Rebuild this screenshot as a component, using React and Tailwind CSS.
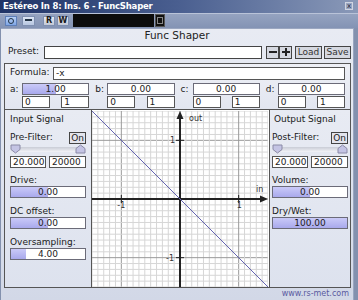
import React from "react";

const font = { fontFamily: '"DejaVu Sans", Verdana, sans-serif' };

const Slider = ({ text, fill, className = "" }) => {
    return (
        <div className={"relative h-[12px] border border-[#6b6b78] bg-white " + className}>
            <div className="absolute left-0 top-0 bottom-0 bg-gradient-to-b from-[#cacaf8] to-[#a9a9ec]" style={{ width: fill + "%" }} />
            <div className="relative text-center text-[9px] leading-[10px] text-[#222]">{text}</div>
        </div>
    );
};

const Field = ({ text, className = "" }) => (
    <div className={"h-[12px] border border-[#555] bg-white pl-[2px] text-[9px] leading-[10px] text-[#222] " + className}>{text}</div>
);

const Handle = () => (
    <svg width="11" height="10" viewBox="0 0 11 10">
        <path d="M1 1 H10 V5.5 L5.5 9 L1 5.5 Z" fill="#c4c4e4" stroke="#8a8aa6" />
    </svg>
);

const FilterBlock = ({ label }) => (
    <div className="flex flex-col">
        <div className="flex items-center justify-between h-[13px]">
            <span>{label}</span>
            <span className="border border-[#444] px-[1px] text-[9px] leading-[10px] bg-[#e2e4ec]">On</span>
        </div>
        <div className="relative h-[11px] mt-[0px]">
            <div className="absolute left-[2px] right-[2px] top-[3px] h-[5px] bg-gradient-to-b from-[#c9ccd6] to-[#f2f3f7] rounded-sm" />
            <div className="absolute left-0 top-0"><Handle /></div>
            <div className="absolute right-0 top-0 rotate-180"><Handle /></div>
        </div>
        <div className="flex justify-between mt-[1px]">
            <Field text="20.000" className="w-[36px]" />
            <Field text="20000" className="w-[37px]" />
        </div>
    </div>
);

const Plot = () => {
    const u = 58.67;
    const c = 88;
    const grid = [];
    for (let i = -15; i <= 15; i++) {
        const p = c + (i / 10) * u;
        const major = i % 10 === 0;
        const col = major ? "#9a9a9a" : "#d6d6d6";
        grid.push(
            <g key={i}>
                <line x1={p} y1="0" x2={p} y2="176" stroke={col} strokeWidth="1" />
                <line x1="0" y1={p} x2="176" y2={p} stroke={col} strokeWidth="1" />
            </g>
        );
    }
    return (
        <svg width="176" height="176" viewBox="0 0 176 176" className="block">
            <rect width="176" height="176" fill="#fff" />
            {grid}
            <line x1="0" y1={c} x2="172" y2={c} stroke="#222" strokeWidth="2" />
            <path d="M176 88 L168 84.5 L168 91.5 Z" fill="#222" />
            <line x1={c} y1="176" x2={c} y2="4" stroke="#222" strokeWidth="2" />
            <path d="M88 0 L84.5 8 L91.5 8 Z" fill="#222" />
            <line x1="0" y1="0" x2="176" y2="176" stroke="#6464b0" strokeWidth="1" />
            <line x1="84" y1={c - u} x2="92" y2={c - u} stroke="#222" />
            <line x1="84" y1={c + u} x2="92" y2={c + u} stroke="#222" />
            <line x1={c - u} y1="84" x2={c - u} y2="92" stroke="#222" />
            <line x1={c + u} y1="84" x2={c + u} y2="92" stroke="#222" />
            <g fontFamily="DejaVu Sans, sans-serif" fontSize="8" fill="#333">
                <text x="97" y="10">out</text>
                <text x="164" y="81">in</text>
                <text x="78" y={c - u + 3}>1</text>
                <text x="74" y={c + u + 3}>-1</text>
                <text x={c - u - 4} y="97">-1</text>
                <text x={c + u - 2} y="97">1</text>
            </g>
        </svg>
    );
};

const App = () => {
    return (
        <div style={font} className="w-[358px] h-[300px] overflow-hidden flex flex-col bg-[#8391ae] text-[#1a1a1a]">
            <div className="h-[14px] flex items-center justify-between bg-gradient-to-r from-[#1f3366] via-[#4a5f90] to-[#8a99b8] pl-[3px] pr-[5px]">
                <span className="text-[8.5px] font-bold text-white tracking-[-0.2px]">Estéreo In 8: Ins. 6 - FuncShaper</span>
                <span className="w-[8px] h-[8px] border border-[#d0d5e2] bg-[#9aa6c2] text-[7px] leading-[6px] text-center text-[#223]">x</span>
            </div>
            <div className="h-[16px] flex items-center pl-[5px] bg-gradient-to-b from-[#95a3c0] to-[#8393b4] border-t border-[#b9c3d8]">
                <div className="w-[12px] h-[10px] bg-gradient-to-b from-[#b8d0f4] to-[#7fa6e6] border border-[#5e7fb8] flex items-center justify-center">
                    <div className="w-[6px] h-[6px] rounded-full border border-[#234]" />
                </div>
                <div className="ml-[5px] w-[13px] h-[10px] bg-gradient-to-b from-[#dde6f4] to-[#b7c6e0] border border-[#7e8fb0] flex items-center justify-center">
                    <div className="w-[7px] h-[4px] border-t-2 border-[#234]" />
                </div>
                <div className="ml-[8px] w-[12px] h-[10px] bg-gradient-to-b from-[#e6e9f0] to-[#c2c8d6] border border-[#7e8fb0] text-[8px] font-bold leading-[8px] text-center">R</div>
                <div className="ml-[2px] w-[12px] h-[10px] bg-gradient-to-b from-[#e6e9f0] to-[#c2c8d6] border border-[#7e8fb0] text-[8px] font-bold leading-[8px] text-center">W</div>
                <div className="ml-[4px] w-[81px] h-[13px] bg-[#0c0c0c]" />
                <div className="ml-[1px] w-[10px] h-[13px] bg-[#111] border border-[#555] flex items-center justify-center">
                    <div className="w-[6px] h-[7px] border border-[#888]" />
                </div>
            </div>
            <div className="flex-1 flex flex-col ml-[1px] mr-[4px] bg-gradient-to-b from-[#e8ebf3] via-[#dfe4ef] to-[#d2d8e7] border-t border-r border-[#9aa6c0] text-[9px]">
                <div className="h-[15px] flex items-center justify-center text-[10.5px] text-[#222]">Func Shaper</div>
                <div className="flex items-center h-[15px] pl-[7px] mt-[1px]">
                    <span className="w-[36px]">Preset:</span>
                    <div className="w-[218px] h-[13px] bg-white border border-[#444]" />
                    <div className="ml-[4px] w-[13px] h-[13px] border border-[#444] bg-[#d5d8e0] flex items-center justify-center">
                        <div className="w-[8px] h-[2px] bg-[#222]" />
                    </div>
                    <div className="w-[13px] h-[13px] border border-[#444] bg-[#d5d8e0] relative flex items-center justify-center">
                        <div className="w-[8px] h-[2px] bg-[#222]" />
                        <div className="absolute w-[2px] h-[8px] bg-[#222]" />
                    </div>
                    <div className="ml-[3px] w-[27px] h-[13px] border border-[#444] bg-[#d5d8e0] text-[9px] leading-[11px] text-center text-[#333]">Load</div>
                    <div className="ml-[2px] w-[27px] h-[13px] border border-[#444] bg-[#d5d8e0] text-[9px] leading-[11px] text-center text-[#333]">Save</div>
                </div>
                <div className="ml-[3px] mt-[3px] border border-[#555] bg-gradient-to-b from-[#eef0f6] to-[#e2e6f0] px-[5px] pt-[2px] pb-[1px] w-[347px]">
                    <div className="flex items-center h-[15px]">
                        <span className="w-[43px]">Formula:</span>
                        <div className="flex-1 h-[13px] bg-white border border-[#555] pl-[2px] text-[9px] leading-[11px]">-x</div>
                    </div>
                    <div className="grid grid-cols-4 gap-x-[6px] mt-[2px]">
                        {[
                            ["a:", "1.00", 50],
                            ["b:", "0.00", 0],
                            ["c:", "0.00", 0],
                            ["d:", "0.00", 0],
                        ].map(([l, v, f]) => (
                            <div key={l} className="flex flex-col">
                                <div className="flex items-center">
                                    <span className="w-[12px]">{l}</span>
                                    <Slider text={v} fill={f} className="flex-1" />
                                </div>
                                <div className="flex justify-between pl-[12px]">
                                    <Field text="0" className="w-[28px]" />
                                    <Field text="1" className="w-[28px]" />
                                </div>
                            </div>
                        ))}
                    </div>
                </div>
                <div className="flex ml-[3px] h-[178px] w-[347px]">
                    <div className="w-[88px] border border-t-0 border-[#555] bg-gradient-to-b from-[#e8ebf3] to-[#dde2ee] px-[5px] pt-[3px] flex flex-col">
                        <div className="h-[13px]">Input Signal</div>
                        <div className="mt-[5px]"><FilterBlock label="Pre-Filter:" /></div>
                        <div className="mt-[7px] h-[11px] leading-[11px]">Drive:</div>
                        <Slider text="0.00" fill={50} />
                        <div className="mt-[7px] h-[12px] leading-[12px]">DC offset:</div>
                        <Slider text="0.00" fill={50} />
                        <div className="mt-[7px] h-[12px] leading-[12px]">Oversampling:</div>
                        <Slider text="4.00" fill={20} />
                    </div>
                    <div className="w-[177px] border-b border-[#555] bg-white pt-[1px]">
                        <Plot />
                    </div>
                    <div className="flex-1 border border-t-0 border-[#555] bg-gradient-to-b from-[#e8ebf3] to-[#dde2ee] px-[2px] pt-[3px] flex flex-col">
                        <div className="h-[13px] pl-[2px]">Output Signal</div>
                        <div className="mt-[5px]"><FilterBlock label="Post-Filter:" /></div>
                        <div className="mt-[7px] h-[11px] leading-[11px]">Volume:</div>
                        <Slider text="0.00" fill={50} />
                        <div className="mt-[7px] h-[12px] leading-[12px]">Dry/Wet:</div>
                        <Slider text="100.00" fill={100} />
                    </div>
                </div>
                <div className="flex-1 flex items-center justify-end pr-[4px] text-[8px] text-[#5a5aa0]">www.rs-met.com</div>
            </div>
        </div>
    );
};

export default App;
